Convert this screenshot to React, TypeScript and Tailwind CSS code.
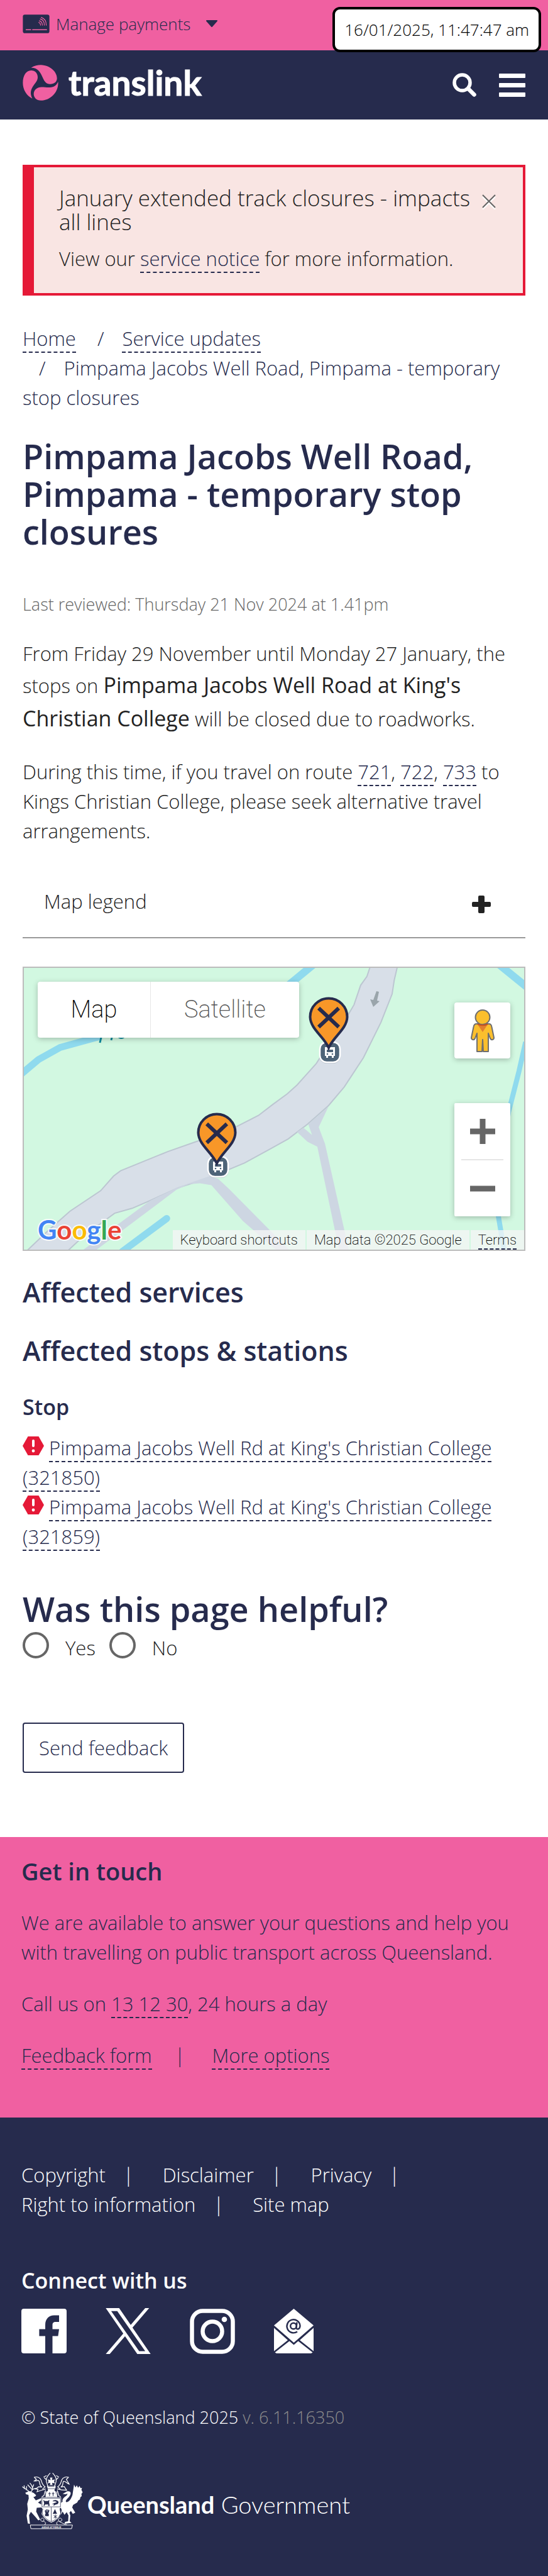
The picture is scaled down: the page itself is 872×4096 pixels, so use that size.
import type { ReactNode } from "react";

const dashed = "border-b-2 border-dashed border-[#262b4d] text-[#262b4d]";
const heading = "font-semibold text-[#262b4d]";

function TextLink({ children }: { children: ReactNode }) {
  return (
    <a href="#" className={dashed}>
      {children}
    </a>
  );
}

function CardIcon() {
  return (
    <svg viewBox="57 26 178 125" className="h-[30px] w-[43px]" aria-hidden="true">
      <rect x="58" y="27" width="176" height="123" rx="13" fill="#262b4d" />
      <g fill="none" stroke="#f060a1" strokeLinecap="round">
        <path strokeWidth="7" d="M80 127H110M123 127H215" />
        <path
          strokeWidth="5"
          d="M163 79q12 2 12 18M167 68q20 4 20 29M173 56q28 7 27 41M180 45q34 12 33 52"
        />
      </g>
    </svg>
  );
}

function TranslinkMark() {
  return (
    <svg viewBox="53 349 233 234" className="size-[57px]" fill="#f060a1" aria-hidden="true">
      <path d="M108 368C130 355 150 350 172 350C232 352 277 395 277 437C277 460 258 475 232 475C208 475 195 458 185 435C170 400 155 368 108 368Z" />
      <path d="M116 570C78 550 54 512 54 467C54 420 75 386 108 386C135 386 151 405 151 430C151 450 140 462 128 478C105 508 98 535 116 570Z" />
      <path d="M284 460C290 525 235 582 172 582C142 582 125 562 125 540C125 512 148 496 176 495C210 494 262 512 284 460Z" />
    </svg>
  );
}

function MapDrawing() {
  return (
    <svg
      viewBox="0 0 796 448"
      preserveAspectRatio="xMidYMid slice"
      className="absolute inset-0 size-full"
      aria-hidden="true"
    >
      <rect width="796" height="448" fill="#d2f8e1" />
      <g transform="translate(-38 -16) scale(.5561 .3112)">
        <g fill="none" stroke="#8fdaee">
          <path vectorEffect="non-scaling-stroke" strokeWidth="11" d="M60 595L110 520L172 458L290 400" />
          <path vectorEffect="non-scaling-stroke" strokeWidth="12" d="M900 30L825 140" />
          <path vectorEffect="non-scaling-stroke" strokeWidth="12" d="M1425 30L1515 160" />
          <path vectorEffect="non-scaling-stroke" strokeWidth="8" d="M1504 430L1485 580L1455 790L1440 950L1426 1200V1320L1443 1500" />
          <path vectorEffect="non-scaling-stroke" strokeWidth="11" strokeLinecap="round" d="M477 1332L350 1500" />
        </g>
        <path
          fill="#d8dfe8"
          stroke="#bcc6d1"
          strokeWidth="2"
          vectorEffect="non-scaling-stroke"
          d="M1062 30L1050 95L1032 140L1013 240L990 310L960 380L930 470L905 540L880 590L850 650L822 695L780 750L740 805L690 850L640 895L560 940L480 990L345 1088L325 1115L288 1190L200 1295L140 1390L75 1500H192L240 1420L328 1305L378 1280L430 1240L510 1175L590 1130L700 1048L770 980L825 925L880 850L940 755L985 660L1040 510L1090 330L1122 185L1128 115L1139 30Z"
        />
        <g fill="#cdd6e2">
          <path d="M512 1170L430 1240L232 1500H270L505 1185L540 1157L572 1152L605 1162L695 1345L795 1500H832L655 1180L625 1130L600 1115Z" />
          <path d="M940 760L912 865L930 950L999 1500H971L908 965L880 940L850 890L868 868L893 905L882 850Z" />
        </g>
      </g>
      <path d="M124 106L121 119M141 106L139 115M149 108q6 7 12 0" fill="none" stroke="#0f8a9c" strokeWidth="3" />
      <path d="M561 37l4 1-3 14 4 1-10 9-5-12 5 1z" fill="#9aa5ab" />
      <BusStop x={487} y={134} />
      <BusStop x={309} y={316} />
      <Pin x={485} y={47} />
      <Pin x={307} y={231} />
    </svg>
  );
}

function BusStop({ x, y }: { x: number; y: number }) {
  return (
    <g transform={`translate(${x} ${y})`}>
      <rect x="-17" y="-15" width="34" height="33" rx="12" fill="#9fa9b3" opacity=".6" />
      <rect x="-16" y="-16" width="32" height="32" rx="11" fill="#4e6478" stroke="#fff" strokeWidth="2.5" />
      <path d="M-8-8H8V6H6V9H3V6H-3V9H-6V6H-8Z" fill="#fff" />
      <path d="M-5-4H5V0H-5Z" fill="#4e6478" />
      <circle cx="-4" cy="3" r="1.3" fill="#4e6478" />
      <circle cx="4" cy="3" r="1.3" fill="#4e6478" />
    </g>
  );
}

function Pin({ x, y }: { x: number; y: number }) {
  return (
    <g transform={`translate(${x} ${y})`}>
      <path
        d="M0 80C-8 62-29 50-29.500 31A29.500 29.500 0 0 1 29.500 31C29 50 8 62 0 80Z"
        fill="#f89728"
        stroke="#262b4d"
        strokeWidth="4"
      />
      <path d="M-16 17L16 47M16 17L-16 47" stroke="#262b4d" strokeWidth="6" />
    </g>
  );
}

function Pegman() {
  return (
    <svg viewBox="0 0 38 68" className="h-[68px] w-[38px]" aria-hidden="true">
      <g fill="#fbbf2d" stroke="#6f6f6f" strokeWidth="2" strokeLinejoin="round">
        <path d="M9 23H29C32 23 33 25 33.500 28L37 45C37 48 33 50 31 46L28 38V67H20L19 48L18 67H10V38L7 46C5 50 1 48 1 45L4.500 28C5 25 6 23 9 23Z" />
        <circle cx="19" cy="12.500" r="11.500" />
      </g>
      <path d="M11 24H27L19 36Z" fill="#e17f2e" />
      <path d="M11 23.500Q19 27 27 23.500" stroke="#c8531f" strokeWidth="2" fill="none" />
    </svg>
  );
}

function MapPanel() {
  const shadow = "bg-white shadow-[0_2px_8px_rgba(0,0,0,0.25)]";
  return (
    <section
      aria-label="Map"
      className="relative mt-[45px] h-[452px] overflow-hidden border-2 border-[#bcbcbc] font-['Roboto',sans-serif] font-extralight"
    >
      <MapDrawing />
      <div className={`absolute left-[22px] top-[22px] flex h-[89px] rounded-[4px] text-[38px] ${shadow}`}>
        <button className="w-[179px] text-black">Map</button>
        <button className="w-[237px] border-l border-[#e6e6e6] text-[#565656]">Satellite</button>
      </div>
      <button
        aria-label="Street View"
        className={`absolute right-[22px] top-[55px] flex size-[89px] items-center justify-center rounded-[4px] ${shadow}`}
      >
        <Pegman />
      </button>
      <div className={`absolute right-[22px] top-[215px] flex w-[89px] flex-col items-center rounded-[2px] ${shadow}`}>
        <button aria-label="Zoom in" className="flex h-[89px] w-full items-center justify-center">
          <svg viewBox="0 0 40 40" className="size-10" aria-hidden="true">
            <path d="M20 0V40M0 20H40" stroke="#666" strokeWidth="9" />
          </svg>
        </button>
        <div className="h-[2px] w-[67px] bg-[#e6e6e6]" />
        <button aria-label="Zoom out" className="flex h-[89px] w-full items-center justify-center">
          <svg viewBox="0 0 40 40" className="size-10" aria-hidden="true">
            <path d="M0 20H40" stroke="#666" strokeWidth="9" />
          </svg>
        </button>
      </div>
      <a
        href="#"
        aria-label="Google"
        className="absolute bottom-[6px] left-[22px] font-['Lato',sans-serif] text-[42px] font-bold leading-[52px] [paint-order:stroke_fill] [-webkit-text-stroke:4px_rgba(255,255,255,0.85)]"
      >
        <span className="text-[#4285f4]">G</span>
        <span className="text-[#ea4335]">o</span>
        <span className="text-[#fbbc05]">o</span>
        <span className="text-[#4285f4]">g</span>
        <span className="text-[#34a853]">l</span>
        <span className="text-[#ea4335]">e</span>
      </a>
      <div className="absolute bottom-0 right-0 flex h-[31px] gap-[2px] text-[22px] leading-[31px] text-black">
        <button className="bg-[#f5f5f5]/75 px-3">Keyboard shortcuts</button>
        <span className="bg-[#f5f5f5]/75 px-3">Map data ©2025 Google</span>
        <span className="bg-[#f5f5f5]/75 px-3">
          <a href="#" className="block h-[31px] border-b-2 border-dashed border-[#262b4d]">
            Terms
          </a>
        </span>
      </div>
    </section>
  );
}

function AlertIcon() {
  return (
    <svg viewBox="0 0 34 30" className="inline h-[30px] w-[34px] align-baseline" aria-hidden="true">
      <path d="M0 15L8.500 0H25.500L34 15L25.500 30H8.500Z" fill="#e51937" />
      <path d="M17 7V15" stroke="#fff" strokeWidth="4" strokeLinecap="round" />
      <circle cx="17" cy="23" r="2.400" fill="#fff" />
    </svg>
  );
}

function Crest() {
  return (
    <svg viewBox="50 50 400 370" className="h-[91px] w-[98px]" fill="#fff" aria-hidden="true">
      <g fill="none" stroke="#fff" strokeWidth="5" strokeLinecap="round">
        <path d="M98 176C92 160 74 160 58 144M70 156L68 136M82 164L84 142M112 176C128 164 124 138 106 120M120 162L92 132M122 152L130 130M124 160L142 154" />
        <path d="M236 56C224 68 208 84 212 108L222 140M254 56C266 68 280 84 276 108L266 140M212 72L196 80M278 72L292 80M214 100L200 86M274 100L288 86" />
        <path d="M134 82C152 76 172 84 178 100C184 116 184 130 204 144L188 158M134 82L148 96L134 106C152 108 158 96 166 108C170 122 168 138 184 146L162 144L142 158L158 160L152 176C170 168 186 166 206 158" />
        <path d="M356 82C338 76 318 84 312 100C306 116 306 130 286 144L302 158M356 82L342 96L360 126C340 120 330 100 322 110C318 122 322 138 306 146L328 142L344 166C328 166 310 166 284 158" />
        <path d="M206 168L196 202L184 208M284 168L294 202L304 208M210 176V208M280 176V208" />
      </g>
      <path d="M222 96L240 100L236 84H252L248 100L268 96L262 108L268 122L250 118L252 132H236L238 118L222 122L226 108Z" />
      <path d="M216 138H272V150L266 158V172H222V158Z" />
      <path d="M224 142H264M222 156H266" stroke="#262b4d" strokeWidth="3" />
      <path d="M216 172H272L280 210H208Z" />
      <path d="M233 178V204M225 188H241M256 178V204M248 188H264" stroke="#262b4d" strokeWidth="4" />
      <path d="M76 182L104 172L130 184L146 198L140 206L128 210L144 232L178 218L180 230L158 246L184 262L180 278L150 280L146 304L172 356L160 362L144 342L124 320L112 306L100 328L104 370L106 384L92 382L84 332L92 290L88 254L98 220L96 196L80 192Z" />
      <path d="M318 190L346 174C372 168 378 188 360 208C346 224 330 236 344 244C364 238 374 220 382 196L392 130L402 148L410 134L418 150L428 138L434 152L444 150L440 164L448 180L440 190L442 204L434 210L430 226L420 232L412 246L398 254L386 262L380 278L400 312L384 320L372 300L362 312L368 330L364 368L376 378L330 384L334 372L354 368L356 330L344 308L330 326L318 304L306 326L312 294L304 274L300 254L318 240C312 220 334 208 346 198L350 188L338 192Z" />
      <path d="M182 216H306V276L296 284L302 320C292 348 264 366 244 374C224 366 198 348 184 320L190 286L182 276Z" stroke="#fff" strokeWidth="5" />
      <g fill="none" stroke="#262b4d" strokeWidth="3">
        <path d="M184 218H304V274H184ZM190 286C184 304 182 322 200 340C216 358 234 366 244 370C258 364 290 350 300 324M244 276V370" />
      </g>
      <g fill="#262b4d">
        <path d="M192 228L202 236H222L232 228L230 244L234 268H222L226 258H204L200 268H194L198 250Z" />
        <path d="M252 238C258 228 276 226 288 236C296 246 288 260 274 258L258 268L262 256L248 256L266 248L280 244C274 236 262 238 252 238Z" />
        <path d="M202 300L208 292L214 312L212 290H220L218 312L226 290L232 298L224 320H228V334H204V320H208Z" />
        <path d="M268 288L282 320H254Z" />
      </g>
      <path d="M248 326C262 316 284 318 296 330C290 346 276 354 266 356C254 350 246 340 248 326Z" fill="#fff" />
      <path d="M260 330L282 346M282 330L260 346M271 324V350" stroke="#262b4d" strokeWidth="4" />
      <g fill="none" stroke="#fff" strokeWidth="4">
        <path d="M108 392H202L208 378L196 366C178 374 168 358 182 348C198 344 202 362 190 370M382 392H284L278 378L290 366C310 374 322 358 306 348C290 344 284 362 298 370C318 380 330 388 346 390M202 392H284" />
        <path d="M108 392L112 416H376L382 392" />
      </g>
      <text x="245" y="411" textAnchor="middle" fontSize="15" fontWeight="700" fontFamily="Roboto, sans-serif">
        AUDAX AT FIDELIS
      </text>
    </svg>
  );
}

function SocialIcons() {
  return (
    <div className="mt-6 flex h-[73px] items-center gap-[62px]">
      <a href="#" aria-label="Facebook">
        <svg viewBox="0 0 72 71" className="h-[71px] w-[72px]" aria-hidden="true">
          <rect width="72" height="71" rx="4" fill="#fff" />
          <path
            fill="#262b4d"
            d="M38 71V43.400H28.400V32.500H38V26C38 16 44 10.600 52 10.600H60V21H54.500C51 21 49.500 22.500 49.500 26V32.500H60L58.400 43.400H49.500V71Z"
          />
        </svg>
      </a>
      <a href="#" aria-label="X">
        <svg viewBox="0 0 1200 1227" className="h-[73px] w-[72px]" fill="#fff" aria-hidden="true">
          <path d="M714.163 519.284L1160.890 0H1055.030L667.137 450.887L357.328 0H0L468.492 681.821L0 1226.370H105.866L515.491 750.218L842.672 1226.370H1200L714.137 519.284ZM569.165 687.828L521.697 619.934L144.011 79.694H306.615L611.412 515.685L658.880 583.579L1055.080 1150.300H892.476L569.165 687.854Z" />
        </svg>
      </a>
      <a href="#" aria-label="Instagram">
        <svg viewBox="0 0 72 72" className="size-[72px]" fill="none" stroke="#fff" strokeWidth="6.500" aria-hidden="true">
          <rect x="3.500" y="3.500" width="65" height="65" rx="17" />
          <circle cx="36" cy="36" r="15.500" />
          <circle cx="55" cy="17" r="4.300" fill="#fff" stroke="none" />
        </svg>
      </a>
      <a href="#" aria-label="Email">
        <svg viewBox="0 0 63 71" className="h-[71px] w-[63px]" fill="#fff" aria-hidden="true">
          <path d="M31.500 0L63 26.500L31.500 54L0 26.500Z" />
          <path d="M0 30.500L22 50L0 67.500ZM63 30.500L41 50L63 67.500ZM24.500 51.500L31.500 57.500L38.500 51.500L61.500 69.500L59 71H4L1.500 69.500Z" />
          <g fill="none" stroke="#262b4d" strokeWidth="2.400">
            <circle cx="31" cy="27.500" r="4.800" />
            <path d="M36.500 21.500L35.500 30C35.500 34 41.500 33 41.500 27A10.500 10.500 0 1 0 37 36.500" />
          </g>
        </svg>
      </a>
    </div>
  );
}

const stops = [
  "Pimpama Jacobs Well Rd at King's Christian College (321850)",
  "Pimpama Jacobs Well Rd at King's Christian College (321859)",
];

const legalLinks = ["Copyright", "Disclaimer", "Privacy", "Right to information", "Site map"];

export default function App() {
  return (
    <div className="relative bg-white font-['Open_Sans','Noto_Sans',sans-serif] text-[31px] font-light leading-[47px] text-[#222]">
      <div className="h-20 bg-[#f060a1] px-9 pt-[13px]">
        <button className="flex items-center text-[26px] leading-[50px] text-[#262b4d]">
          <CardIcon />
          <span className="ml-[10px]">Manage payments</span>
          <svg viewBox="0 0 20 12" className="ml-6 h-3 w-5" aria-hidden="true">
            <path d="M2 1H18L10 10Z" fill="#262b4d" stroke="#262b4d" strokeWidth="2" strokeLinejoin="round" />
          </svg>
        </button>
      </div>
      <div className="absolute right-[11px] top-[11px] flex h-[72px] items-center rounded-[12px] border-4 border-black bg-white px-[15px] text-[26px] text-black">
        16/01/2025, 11:47:47 am
      </div>

      <header className="flex h-[110px] items-center justify-between bg-[#262b4d] px-9 pb-2">
        <a href="#" className="flex items-center gap-4">
          <TranslinkMark />
          <span className="font-['Lato','Open_Sans',sans-serif] text-[55px] font-bold leading-[57px] text-white [-webkit-text-stroke:1px_white]">
            translink
          </span>
        </a>
        <div className="mt-2 flex items-center gap-9">
          <button aria-label="Search">
            <svg viewBox="0 0 38 38" className="size-[38px]" aria-hidden="true">
              <circle cx="15.500" cy="15.500" r="12.500" fill="none" stroke="#fff" strokeWidth="5.500" />
              <path d="M25.500 25.500L34.500 34.500" stroke="#fff" strokeWidth="6.500" strokeLinecap="round" />
            </svg>
          </button>
          <button aria-label="Menu" className="flex w-[42px] flex-col gap-2">
            <span className="h-[7px] rounded-[1px] bg-white" />
            <span className="h-[7px] rounded-[1px] bg-white" />
            <span className="h-[7px] rounded-[1px] bg-white" />
          </button>
        </div>
      </header>

      <main className="px-9 pb-[102px] pt-[72px]">
        <section className="border-4 border-l-[18px] border-[#e51937] bg-[#f9e5e3] pb-[31px] pl-10 pr-[42px] pt-[30px]">
          <div className="flex items-start">
            <p className="flex-1 text-[35px] leading-[38px]">January extended track closures - impacts all lines</p>
            <button aria-label="Close" className="flex h-[50px] w-6 items-center justify-center">
              <svg viewBox="0 0 22 24" className="h-6 w-[22px]" aria-hidden="true">
                <path d="M1 4L21 24M21 4L1 24" stroke="#fff" strokeWidth="2" />
                <path d="M1 1L21 21M21 1L1 21" stroke="#666" strokeWidth="2" />
              </svg>
            </button>
          </div>
          <p className="mt-4">
            View our <TextLink>service notice</TextLink> for more information.
          </p>
        </section>

        <nav aria-label="Breadcrumb" className="mt-[45px] text-[#262b4d]">
          <ol className="flex flex-wrap gap-x-2">
            <li>
              <TextLink>Home</TextLink>
            </li>
            <li>
              <span className="pl-[26px] pr-[29px]">/</span>
              <TextLink>Service updates</TextLink>
            </li>
            <li>
              <span className="pl-[26px] pr-[29px]">/</span>
              Pimpama Jacobs Well Road, Pimpama - temporary stop closures
            </li>
          </ol>
        </nav>

        <h1 className={`mt-[39px] text-[54px] leading-[60px] ${heading}`}>
          Pimpama Jacobs Well Road, Pimpama - temporary stop closures
        </h1>
        <p className="mt-[66px] text-[27px] leading-[40px] text-[#666]">
          Last reviewed: Thursday 21 Nov 2024 at 1.41pm
        </p>
        <p className="mt-[35px]">
          From Friday 29 November until Monday 27 January, the stops on{" "}
          <strong className="text-[34px] font-normal leading-[53px]">
            Pimpama Jacobs Well Road at King's Christian College
          </strong>{" "}
          will be closed due to roadworks.
        </p>
        <p className="mt-[35px]">
          During this time, if you travel on route <TextLink>721</TextLink>, <TextLink>722</TextLink>,{" "}
          <TextLink>733</TextLink> to Kings Christian College, please seek alternative travel arrangements.
        </p>

        <button
          aria-expanded="false"
          className="mt-[65px] flex w-full items-center justify-between border-b-2 border-[#999] pb-[33px] pl-[34px] pr-[55px]"
        >
          <span>Map legend</span>
          <svg viewBox="0 0 30 28" className="mt-2 h-7 w-[30px]" aria-hidden="true">
            <path
              d="M12 0H18Q20 0 20 2V10H28Q30 10 30 12V16Q30 18 28 18H20V26Q20 28 18 28H12Q10 28 10 26V18H2Q0 18 0 16V12Q0 10 2 10H10V2Q10 0 12 0Z"
              fill="#222"
            />
          </svg>
        </button>

        <MapPanel />

        <h3 className={`mt-[42px] text-[43px] leading-[48px] ${heading}`}>Affected services</h3>
        <h3 className={`mt-[45px] text-[43px] leading-[48px] ${heading}`}>Affected stops &amp; stations</h3>
        <h4 className={`mt-[45px] text-[34px] leading-[40px] ${heading}`}>Stop</h4>
        <ul className="mt-[22px]">
          {stops.map((stop) => (
            <li key={stop}>
              <AlertIcon /> <TextLink>{stop}</TextLink>
            </li>
          ))}
        </ul>

        <form onSubmit={(event) => event.preventDefault()}>
          <fieldset>
            <legend className={`pt-[61px] text-[54px] leading-[60px] ${heading}`}>Was this page helpful?</legend>
            <div className="mt-[7px] flex items-start">
              <input
                id="helpful-yes"
                type="radio"
                name="helpful"
                className="size-[42px] appearance-none rounded-full border-4 border-[#666]"
              />
              <label htmlFor="helpful-yes" className="ml-[26px] leading-[50px]">
                Yes
              </label>
              <input
                id="helpful-no"
                type="radio"
                name="helpful"
                className="ml-[22px] size-[42px] appearance-none rounded-full border-4 border-[#666]"
              />
              <label htmlFor="helpful-no" className="ml-[26px] leading-[50px]">
                No
              </label>
            </div>
          </fieldset>
          <button className="mt-[94px] block h-20 rounded-[4px] border-2 border-[#262b4d] px-6 text-[#262b4d]">
            Send feedback
          </button>
        </form>
      </main>

      <section className="bg-[#f060a1] px-[34px] pb-[75px] pt-[30px] text-[#262b4d]">
        <h2 className={`text-[38px] leading-[48px] ${heading}`}>Get in touch</h2>
        <p className="mt-[35px]">
          We are available to answer your questions and help you with travelling on public transport across Queensland.
        </p>
        <p className="mt-[35px]">
          Call us on <TextLink>13 12 30</TextLink>, 24 hours a day
        </p>
        <p className="mt-[35px]">
          <TextLink>Feedback form</TextLink>
          <span className="pl-9 pr-[43px]">|</span>
          <TextLink>More options</TextLink>
        </p>
      </section>

      <footer className="bg-[#262b4d] px-[34px] pb-[74px] pt-[68px] text-white">
        <ul className="flex flex-wrap">
          {legalLinks.map((label, index) => (
            <li key={label}>
              <a href="#">{label}</a>
              {index < legalLinks.length - 1 && <span className="pl-7 pr-[46px]">|</span>}
            </li>
          ))}
        </ul>
        <h2 className="mt-[77px] text-[34px] font-semibold leading-[40px]">Connect with us</h2>
        <SocialIcons />
        <p className="mt-[81px] text-[27px] leading-[40px]">
          © State of Queensland 2025 <span className="text-[#8c8c8c]">v. 6.11.16350</span>
        </p>
        <a
          href="#"
          className="mt-[67px] flex items-center gap-[7px] font-['Lato','Open_Sans',sans-serif] text-[38px] leading-[48px]"
        >
          <Crest />
          <span className="pt-[10px]">
            <b className="font-bold">Queensland</b> Government
          </span>
        </a>
      </footer>
    </div>
  );
}
